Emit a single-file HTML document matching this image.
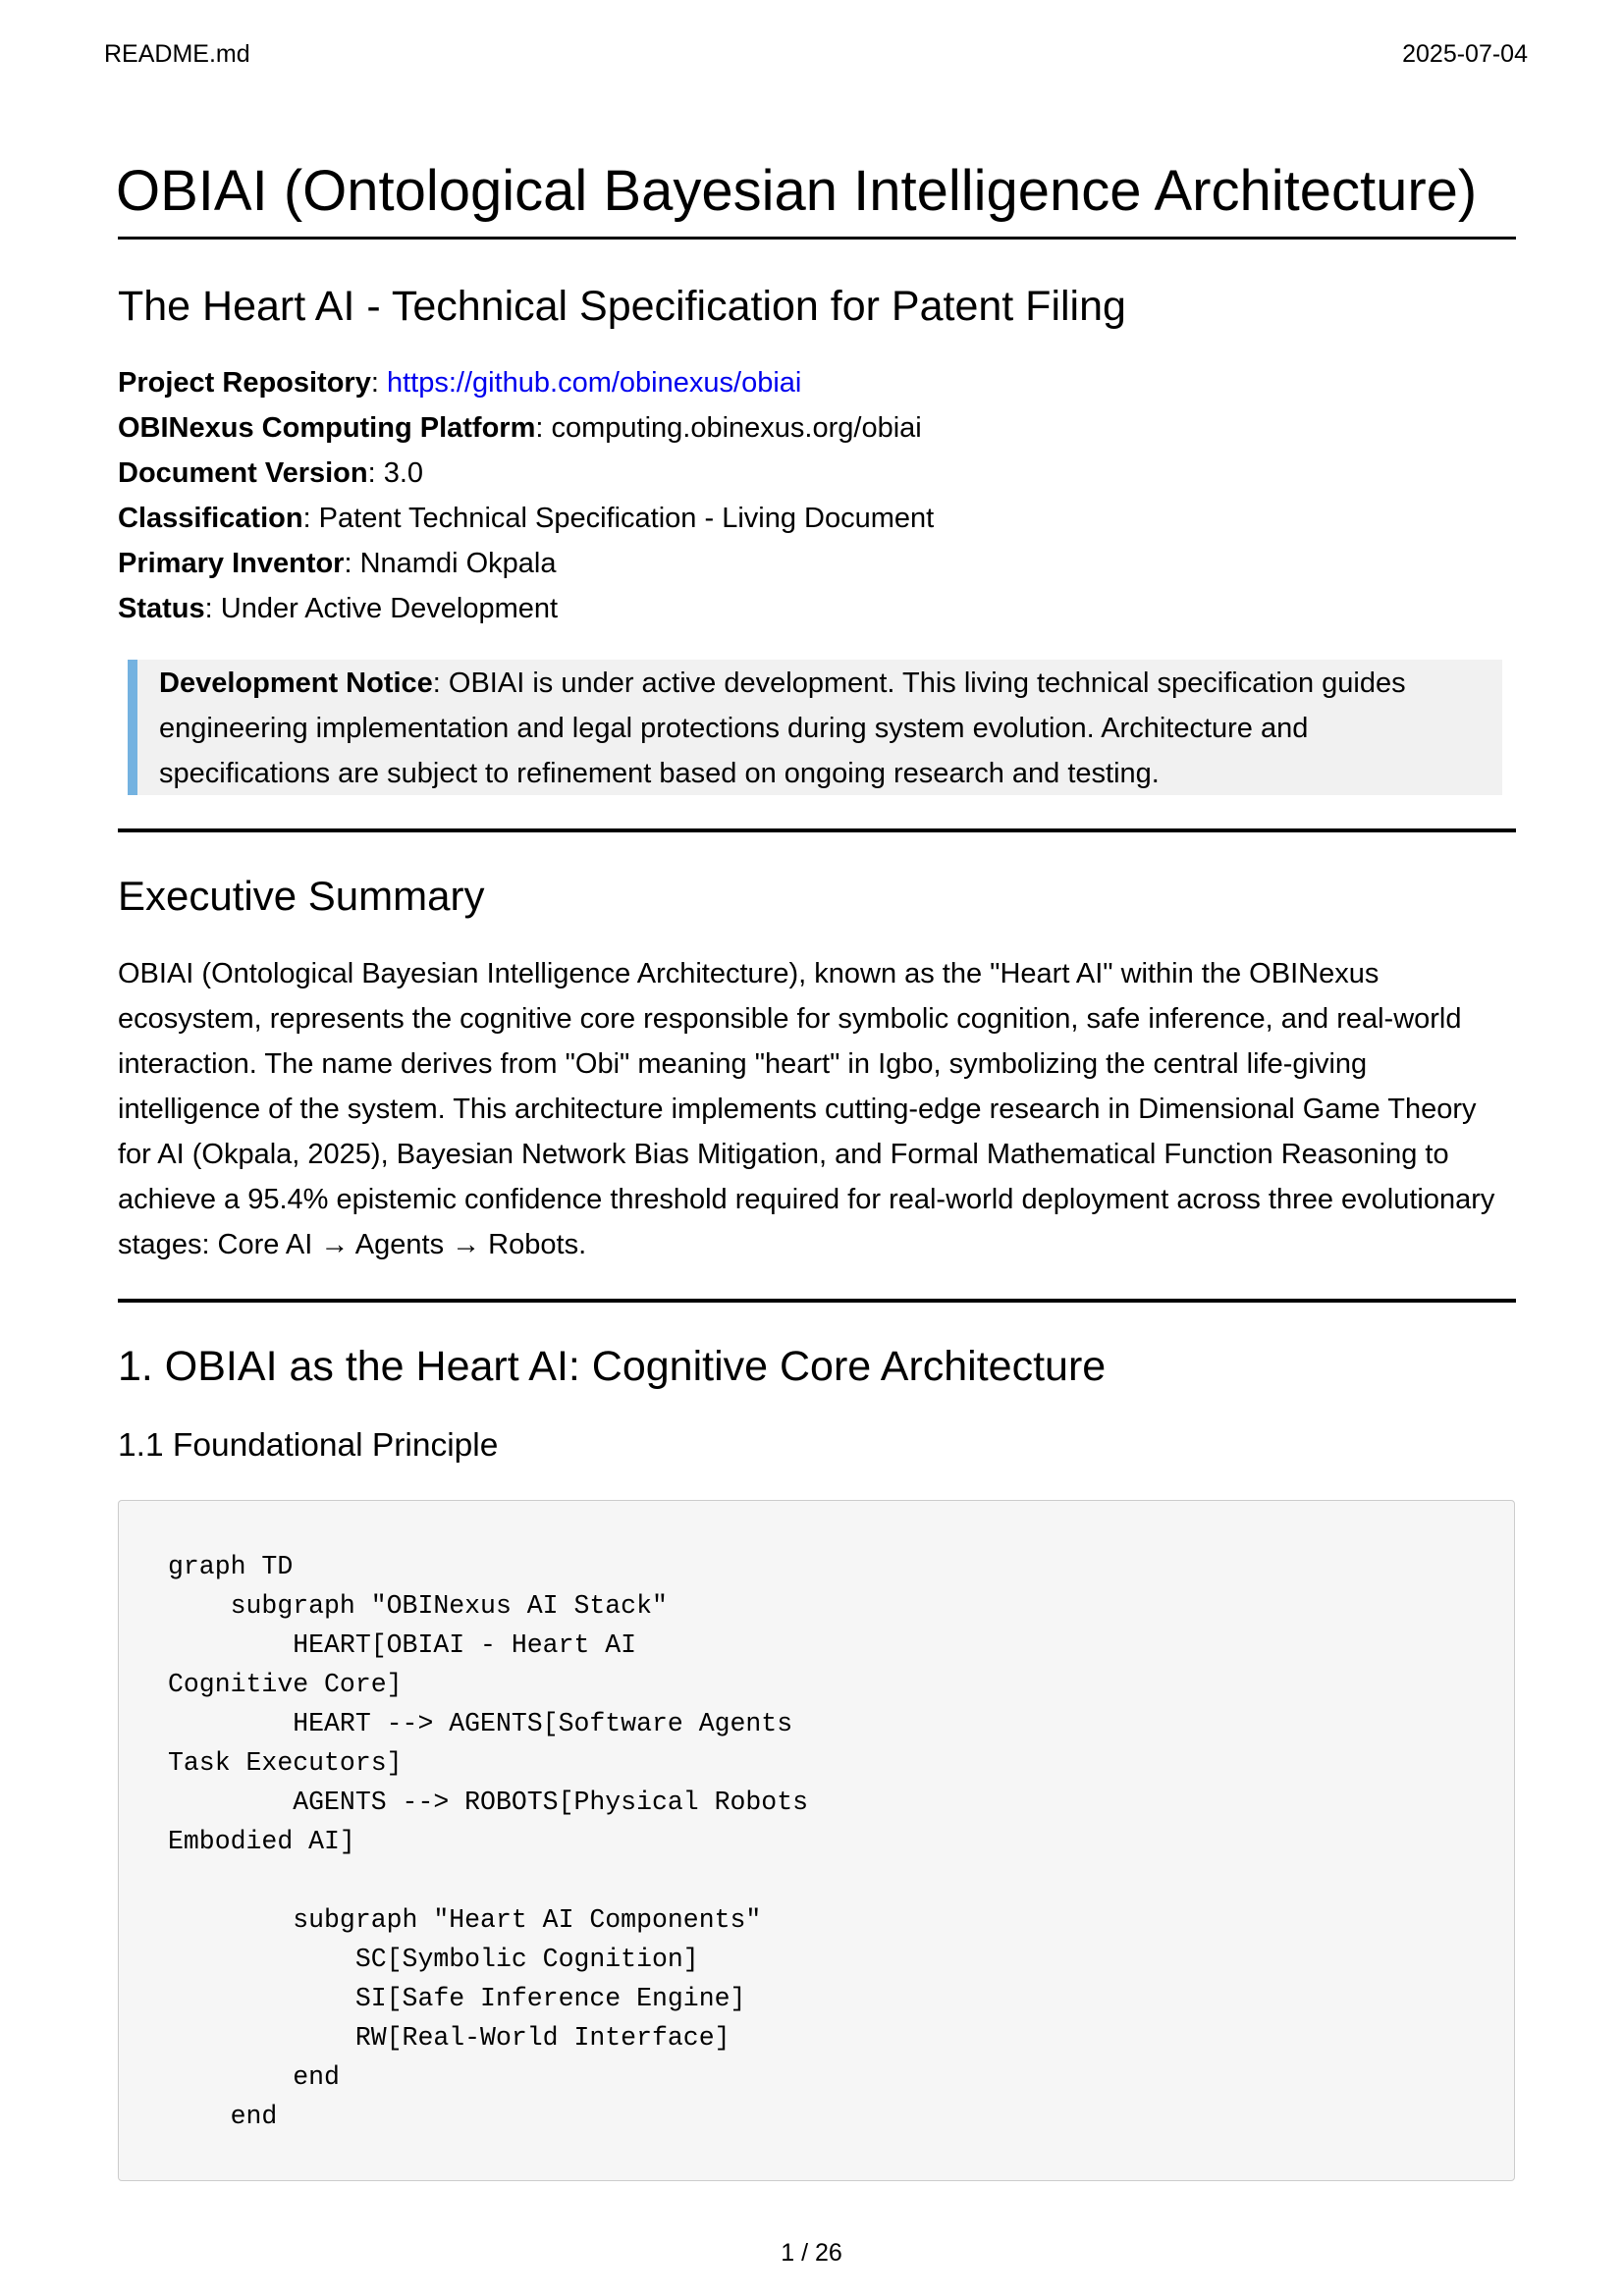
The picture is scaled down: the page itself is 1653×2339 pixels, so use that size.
<!DOCTYPE html>
<html><head><meta charset="utf-8"><style>
*{margin:0;padding:0}
body{width:1653px;height:2339px;background:#fff;position:relative;font-family:"Liberation Sans",sans-serif;color:#000;overflow:hidden}
.a{position:absolute;white-space:nowrap}
.t{font-size:29px;line-height:46px;height:46px}
.m{font-family:"Liberation Mono",monospace;font-size:26.5px;line-height:40px;height:40px;white-space:pre}
b{font-weight:bold}
.rule{position:absolute;left:120px;width:1424px;background:#000}
</style></head><body>
<div class="a" style="left:106px;top:41px;font-size:25px">README.md</div>
<div class="a" style="right:97px;top:41px;font-size:25px">2025-07-04</div>

<div class="a" style="left:118px;top:160px;font-size:58px;line-height:70px">OBIAI (Ontological Bayesian Intelligence Architecture)</div>
<div class="rule" style="top:241px;height:3px"></div>

<div class="a" style="left:120px;top:288px;font-size:43px;line-height:48px">The Heart AI - Technical Specification for Patent Filing</div>

<div class="a t" style="left:120px;top:367px"><b>Project Repository</b>: <span style="color:#0000ee">https://github.com/obinexus/obiai</span></div>
<div class="a t" style="left:120px;top:413px"><b>OBINexus Computing Platform</b>: computing.obinexus.org/obiai</div>
<div class="a t" style="left:120px;top:459px"><b>Document Version</b>: 3.0</div>
<div class="a t" style="left:120px;top:505px"><b>Classification</b>: Patent Technical Specification - Living Document</div>
<div class="a t" style="left:120px;top:551px"><b>Primary Inventor</b>: Nnamdi Okpala</div>
<div class="a t" style="left:120px;top:597px"><b>Status</b>: Under Active Development</div>

<div class="a" style="left:130px;top:672px;width:1400px;height:138px;background:#f1f1f1"></div>
<div class="a" style="left:130px;top:672px;width:10px;height:138px;background:#74b2e0"></div>
<div class="a t" style="left:162px;top:673px"><b>Development Notice</b>: OBIAI is under active development. This living technical specification guides</div>
<div class="a t" style="left:162px;top:719px">engineering implementation and legal protections during system evolution. Architecture and</div>
<div class="a t" style="left:162px;top:765px">specifications are subject to refinement based on ongoing research and testing.</div>

<div class="rule" style="top:844px;height:4px"></div>
<div class="a" style="left:120px;top:889px;font-size:42px;line-height:48px">Executive Summary</div>

<div class="a t" style="left:120px;top:969px">OBIAI (Ontological Bayesian Intelligence Architecture), known as the "Heart AI" within the OBINexus</div>
<div class="a t" style="left:120px;top:1015px">ecosystem, represents the cognitive core responsible for symbolic cognition, safe inference, and real-world</div>
<div class="a t" style="left:120px;top:1061px">interaction. The name derives from "Obi" meaning "heart" in Igbo, symbolizing the central life-giving</div>
<div class="a t" style="left:120px;top:1107px">intelligence of the system. This architecture implements cutting-edge research in Dimensional Game Theory</div>
<div class="a t" style="left:120px;top:1153px">for AI (Okpala, 2025), Bayesian Network Bias Mitigation, and Formal Mathematical Function Reasoning to</div>
<div class="a t" style="left:120px;top:1199px">achieve a 95.4% epistemic confidence threshold required for real-world deployment across three evolutionary</div>
<div class="a t" style="left:120px;top:1245px">stages: Core AI → Agents → Robots.</div>

<div class="rule" style="top:1323px;height:4px"></div>
<div class="a" style="left:120px;top:1368px;font-size:43px;line-height:48px">1. OBIAI as the Heart AI: Cognitive Core Architecture</div>
<div class="a" style="left:120px;top:1453px;font-size:33.5px;line-height:40px">1.1 Foundational Principle</div>

<div class="a" style="left:120px;top:1528px;width:1421px;height:692px;background:#f6f6f6;border:1.5px solid #ccc;border-radius:4px"></div>
<div class="a m" style="left:171px;top:1576px">graph TD
    subgraph "OBINexus AI Stack"
        HEART[OBIAI - Heart AI
Cognitive Core]
        HEART --> AGENTS[Software Agents
Task Executors]
        AGENTS --> ROBOTS[Physical Robots
Embodied AI]

        subgraph "Heart AI Components"
            SC[Symbolic Cognition]
            SI[Safe Inference Engine]
            RW[Real-World Interface]
        end
    end</div>

<div class="a" style="left:0;width:1653px;text-align:center;top:2281px;font-size:25px">1 / 26</div>
</body></html>
